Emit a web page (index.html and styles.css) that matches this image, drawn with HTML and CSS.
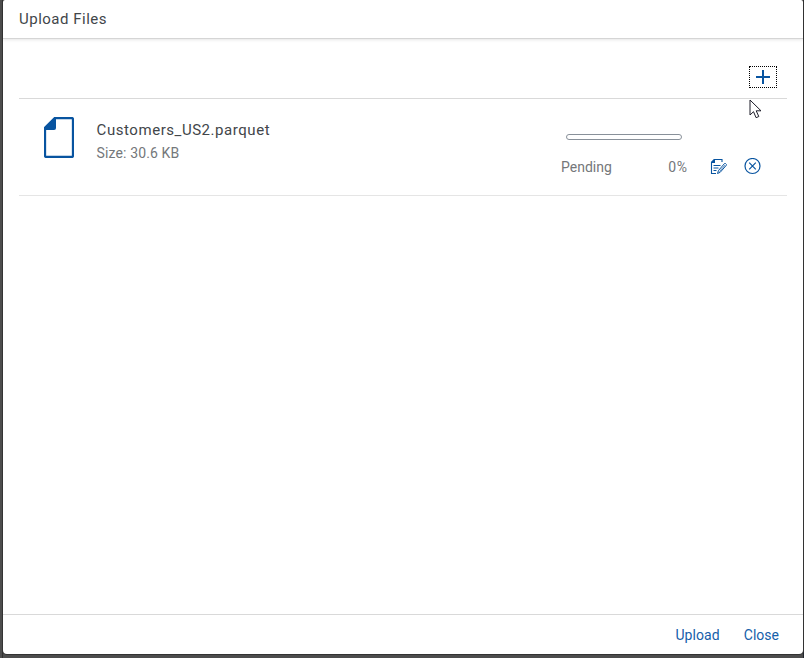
FILE: index.html
```html
<!DOCTYPE html>
<html lang="en">
<head>
<meta charset="utf-8">
<title>Upload Files</title>
<link rel="stylesheet" href="styles.css">
</head>
<body>
<section class="dialog" role="dialog" aria-labelledby="title">
  <header class="dialog-header"><h1 id="title">Upload Files</h1></header>
  <main class="content">
    <div class="toolbar">
      <button class="add" aria-label="Add file">
        <svg width="14" height="14" viewBox="0 0 14 14"><path d="M7 0v14M0 7h14" stroke="#0854a0" stroke-width="2"/></svg>
      </button>
    </div>
    <article class="item">
      <svg class="file-icon" width="30" height="41" viewBox="0 0 30 41">
        <path d="M11 1h16.500q1.500 0 1.500 1.500v36q0 1.500-1.500 1.500h-25q-1.500 0-1.500-1.500V11z" fill="#fff" stroke="#0854a0" stroke-width="2.300"/>
        <path d="M10.500 0H12v11q0 2-2 2H0v-2.500z" fill="#0854a0"/>
      </svg>
      <div class="details">
        <div class="name"><span>Customers_US2.parquet</span></div>
        <div class="size"><span>Size: 30.6 KB</span></div>
      </div>
      <div class="progress">
        <div class="track"></div>
        <div class="status"><span class="pending">Pending</span><span class="percent">0%</span></div>
      </div>
      <div class="actions">
        <button aria-label="Edit">
          <svg width="17" height="17" viewBox="0 0 17 17" fill="none" stroke="#0854a0">
            <path d="M6 15.500H1.500V4.500L4.500 1.500h7.500V4" stroke-width="1.100"/>
            <path d="M4 1h1v4H1V4z" fill="#0854a0" stroke="none"/>
            <path d="M3.500 7.500h7M3.500 10h5M3.500 12.500h3" stroke-width="1"/>
            <path d="M7.500 15.500l1-3 6-7q.5-.5 1 0l.8.8q.4.5 0 1l-6.100 7z" fill="#fff" stroke-width="1"/>
            <path d="M9.500 13.500l5.500-6.400" stroke-width=".7"/>
          </svg>
        </button>
        <button aria-label="Remove">
          <svg width="17" height="17" viewBox="0 0 17 17" fill="none" stroke="#0854a0" stroke-width="1.200">
            <circle cx="8.500" cy="8" r="7.500"/><path d="M5.200 4.700l6.600 6.600M11.800 4.700l-6.600 6.600"/>
          </svg>
        </button>
      </div>
    </article>
  </main>
  <footer class="dialog-footer"><button class="upload">Upload</button><button class="close">Close</button></footer>
</section>
<svg class="cursor" width="13" height="20" viewBox="0 0 13 20"><path d="M1 1v15l3.500-3.300 2.600 6 2.700-1.200-2.600-5.700H12z" fill="#fff" stroke="#1c1c28" stroke-width="1"/></svg>
</body>
</html>
```

FILE: styles.css
```css
* { box-sizing: border-box; }
body {
  margin: 0;
  height: 658px;
  padding: 0 1px 4px 3px;
  overflow: hidden;
  background: linear-gradient(to right, #4d4d4d 0 2px, #303030 2px 3px, #4d4d4d 3px 803px, #20242b 803px);
  font-family: Roboto, "Noto Sans", sans-serif;
  color: #42464a;
}
button { padding: 0; border: 0; background: none; font: inherit; color: #1660aa; }
svg { display: block; }
.dialog {
  height: 654px;
  display: flex;
  flex-direction: column;
  background: #fff;
  border-radius: 2px 2px 4px 4px;
  box-shadow: 0 0 0 1px #333;
}
.dialog-header {
  height: 39px;
  flex: none;
  padding: 0 16px;
  border-bottom: 1px solid #d5d5d5;
  box-shadow: 0 1px 3px rgba(0, 0, 0, .1);
}
h1 { margin: 0; font-size: 15px; font-weight: 400; line-height: 38px; letter-spacing: .5px; }
.content { flex: 1; padding: 16px 16px 0; }
.toolbar {
  height: 44px;
  display: flex;
  align-items: center;
  justify-content: flex-end;
  padding-right: 10px;
  border-bottom: 1px solid #d9d9d9;
}
.add {
  width: 28px;
  height: 22px;
  display: grid;
  place-items: center;
  border: 1px dotted #000;
}
.item {
  height: 97px;
  display: flex;
  padding-left: 25px;
  border-bottom: 1px solid #e5e5e5;
}
.file-icon { margin-top: 18px; }
.details { width: 464px; padding: 20px 0 0 22.6px; }
.name { font-size: 15px; line-height: 22px; letter-spacing: .55px; }
.size { margin-top: 2px; font-size: 14px; line-height: 20px; letter-spacing: .12px; color: #74777a; }
.progress { width: 126px; margin-left: 23px; padding-top: 35px; }
.track { width: 116px; height: 6px; margin-left: 5px; border: 1px solid #89919a; border-radius: 3px; }
.status {
  display: flex;
  justify-content: space-between;
  margin-top: 17px;
  font-size: 14px;
  line-height: 20px;
  color: #74777a;
}
.percent { letter-spacing: .7px; margin-right: -.7px; }
.actions { display: flex; gap: 17px; padding: 58px 0 0 23px; height: 76px; }
.dialog-footer {
  height: 40px;
  flex: none;
  display: flex;
  justify-content: flex-end;
  gap: 24px;
  padding-right: 24px;
  border-top: 1px solid #d9d9d9;
  font-size: 14px;
}
.dialog-footer button { height: 40px; }
.upload { letter-spacing: .1px; }
.cursor { position: absolute; left: 749px; top: 99px; }
```
